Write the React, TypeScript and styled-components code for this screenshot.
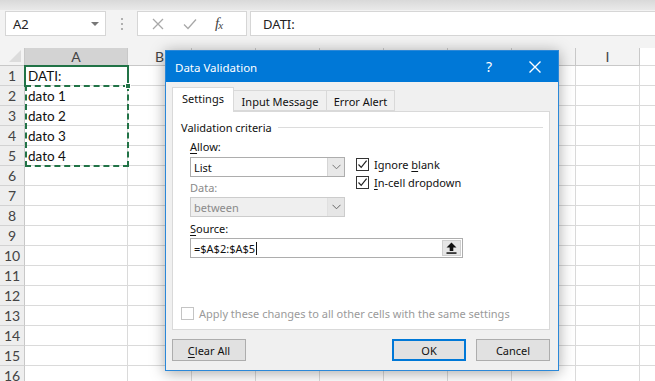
import React from "react";
import styled, { createGlobalStyle } from "styled-components";

const Global = createGlobalStyle`
  html, body { margin: 0; padding: 0; background: #ffffff; }
  body { overflow: hidden; }
  * { box-sizing: border-box; }
`;

const UI = `"Noto Sans", "Open Sans", sans-serif`;
const CELL = `Lato, "Liberation Sans", sans-serif`;

const Screen = styled.div`
  position: relative;
  width: 655px;
  height: 381px;
  overflow: hidden;
  background: #ffffff;
  display: flex;
  flex-direction: column;
`;

/* ---------- formula toolbar ---------- */
const TopBand = styled.div`
  height: 10px;
  background: linear-gradient(#d9d9d9, #e9e9e9);
  flex: none;
`;

const Toolbar = styled.div`
  height: 38px;
  flex: none;
  background: #f3f3f3;
  display: flex;
  align-items: flex-start;
  padding: 1px 0 0 5px;
`;

const NameBox = styled.div`
  width: 101px;
  height: 25px;
  background: #fff;
  border: 1px solid #d6d6d6;
  display: flex;
  align-items: center;
  justify-content: space-between;
  padding: 0 6px 0 7px;
  font: 13px ${UI};
  color: #222;
`;

const Caret = styled.span`
  width: 0;
  height: 0;
  border-left: 4px solid transparent;
  border-right: 4px solid transparent;
  border-top: 4px solid #777;
`;

const Grip = styled.div`
  width: 31px;
  height: 25px;
  display: flex;
  flex-direction: column;
  align-items: center;
  justify-content: center;
  gap: 3px;
`;

const Dot = styled.span`
  width: 2px;
  height: 2px;
  background: #b0b0b0;
`;

const FxBox = styled.div`
  width: 110px;
  height: 25px;
  background: #fff;
  border: 1px solid #d6d6d6;
  display: flex;
  align-items: center;
  padding-left: 14px;
  gap: 19px;
`;

const Fx = styled.span`
  font: italic 15px "Liberation Serif", serif;
  color: #444;
  margin-left: -1px;
  letter-spacing: -1px;
`;

const FxSub = styled.span`
  font-size: 11px;
  position: relative;
  top: 1px;
`;

const FormulaInput = styled.div`
  flex: 1;
  height: 25px;
  margin-left: 3px;
  background: #fff;
  border: 1px solid #d6d6d6;
  border-right: none;
  display: flex;
  align-items: center;
  padding-left: 12px;
  font: 13px ${UI};
  color: #222;
`;

/* ---------- sheet ---------- */
const SheetWrap = styled.div`
  position: relative;
  flex: 1;
  overflow: hidden;
`;

const Sheet = styled.div`
  display: grid;
  grid-template-columns: 25px 103px repeat(9, 64px);
  grid-template-rows: 18px;
  grid-auto-rows: 20px;
`;

const Cell = styled.div`
  border-right: 1px solid #dadada;
  border-bottom: 1px solid #dadada;
  font: 13.5px ${CELL};
  color: #111;
  padding: 0 0 1px 3px;
  display: flex;
  align-items: flex-end;
  white-space: nowrap;
  overflow: hidden;
`;

const ColHead = styled.div<{ $sel?: boolean }>`
  background: ${(p) => (p.$sel ? "#d3d3d3" : "#f3f3f3")};
  border-right: 1px solid #c8c8c8;
  border-bottom: 1px solid ${(p) => (p.$sel ? "#b8b8b8" : "#c8c8c8")};
  font: 14px ${CELL};
  color: #444;
  display: flex;
  align-items: center;
  justify-content: center;
`;

const RowHead = styled.div`
  background: #eeeeee;
  border-right: 1px solid #c8c8c8;
  border-bottom: 1px solid #d2d2d2;
  font: 14px ${CELL};
  color: #444;
  display: flex;
  align-items: center;
  justify-content: center;
`;

const Corner = styled.div`
  background: #f3f3f3;
  border-right: 1px solid #c8c8c8;
  border-bottom: 1px solid #c8c8c8;
  position: relative;
  &::after {
    content: "";
    position: absolute;
    right: 3px;
    bottom: 3px;
    width: 0;
    height: 0;
    border-left: 12px solid transparent;
    border-bottom: 12px solid #dcdcdc;
  }
`;

const ActiveCell = styled.div`
  position: absolute;
  left: 24px;
  top: 17px;
  width: 105px;
  height: 22px;
  border: 2px solid #217346;
  border-bottom: none;
  pointer-events: none;
`;

const Marquee = styled.div`
  position: absolute;
  left: 25px;
  top: 37px;
  width: 104px;
  height: 82px;
  border: 2px dashed #217346;
  pointer-events: none;
`;

const Handle = styled.div`
  position: absolute;
  left: 125px;
  top: 35px;
  width: 6px;
  height: 6px;
  background: #217346;
  border: 1px solid #fff;
`;

/* ---------- dialog ---------- */
const Dialog = styled.div`
  position: absolute;
  left: 165px;
  top: 50px;
  width: 394px;
  height: 321px;
  background: #f0f0f0;
  border: 1px solid #2b88d8;
  box-shadow: 0 2px 14px rgba(0, 0, 0, 0.35);
  display: flex;
  flex-direction: column;
  font: 11px ${UI};
  color: #111;
`;

const TitleBar = styled.div`
  height: 31px;
  background: #0078d7;
  color: #fff;
  display: flex;
  align-items: center;
  padding-left: 9px;
  flex: none;
`;

const Title = styled.span`
  flex: 1;
  font: 11.5px ${UI};
  margin-top: 1px;
`;

const Help = styled.span`
  font: 14px ${UI};
  width: 18px;
  text-align: center;
  margin-right: 30px;
`;

const CloseBtn = styled.span`
  width: 14px;
  height: 14px;
  margin-right: 16px;
  display: flex;
`;

const DialogBody = styled.div`
  flex: 1;
  padding: 5px 8px 10px 6px;
  display: flex;
  flex-direction: column;
`;

const Tabs = styled.div`
  display: flex;
  align-items: flex-end;
  height: 24px;
  position: relative;
  z-index: 1;
`;

const Tab = styled.div<{ $active?: boolean; $w: number }>`
  width: ${(p) => p.$w}px;
  height: ${(p) => (p.$active ? 25 : 21)}px;
  background: ${(p) => (p.$active ? "#ffffff" : "#f0f0f0")};
  border: 1px solid #d9d9d9;
  border-bottom: ${(p) => (p.$active ? "none" : "1px solid #d9d9d9")};
  border-left: ${(p) => (p.$active ? "1px solid #d9d9d9" : "none")};
  margin-bottom: ${(p) => (p.$active ? -1 : 0)}px;
  display: flex;
  align-items: center;
  justify-content: center;
  padding-top: ${(p) => (p.$active ? 0 : 1)}px;
  padding-bottom: ${(p) => (p.$active ? 4 : 0)}px;
`;

const Panel = styled.div`
  height: 219px;
  background: #fff;
  border: 1px solid #d9d9d9;
  padding: 0 6px 0 8px;
  display: flex;
  flex-direction: column;
`;

const GroupHeader = styled.div`
  margin-top: 7px;
  height: 16px;
  display: flex;
  align-items: center;
  gap: 6px;
  &::after {
    content: "";
    flex: 1;
    height: 1px;
    background: #dcdcdc;
  }
`;

const Criteria = styled.div`
  padding-left: 9px;
  display: flex;
  flex-direction: column;
`;

const CriteriaRow = styled.div`
  display: flex;
`;

const LeftCol = styled.div`
  width: 155px;
  display: flex;
  flex-direction: column;
`;

const RightCol = styled.div`
  margin-left: 11px;
  padding-top: 20px;
  display: flex;
  flex-direction: column;
`;

const FieldLabel = styled.div<{ $disabled?: boolean; $mt: number }>`
  height: 16px;
  line-height: 16px;
  margin-top: ${(p) => p.$mt}px;
  color: ${(p) => (p.$disabled ? "#8a8a8a" : "#111")};
`;

const U = styled.span`
  text-decoration: underline;
  text-underline-offset: 2px;
`;

const Select = styled.div<{ $disabled?: boolean; $mt: number }>`
  margin-top: ${(p) => p.$mt}px;
  height: 20px;
  display: flex;
  border: 1px solid ${(p) => (p.$disabled ? "#cccccc" : "#adadad")};
  background: ${(p) => (p.$disabled ? "#efefef" : "#ffffff")};
  color: ${(p) => (p.$disabled ? "#8a8a8a" : "#111")};
`;

const SelectText = styled.div`
  flex: 1;
  padding-left: 3px;
  display: flex;
  align-items: center;
`;

const SelectButton = styled.div<{ $disabled?: boolean }>`
  width: 17px;
  border-left: 1px solid ${(p) => (p.$disabled ? "#e0e0e0" : "#d5d5d5")};
  background: ${(p) => (p.$disabled ? "#e6e6e6" : "#e8e8e8")};
  display: flex;
  align-items: center;
  justify-content: center;
`;

const CheckRow = styled.label<{ $disabled?: boolean }>`
  height: 18px;
  display: flex;
  align-items: center;
  gap: 5px;
  color: ${(p) => (p.$disabled ? "#9a9a9a" : "#111")};
`;

const Box = styled.span<{ $disabled?: boolean }>`
  width: 13px;
  height: 13px;
  border: 1px solid ${(p) => (p.$disabled ? "#c4c4c4" : "#333")};
  background: #fff;
  display: flex;
  align-items: center;
  justify-content: center;
  flex: none;
`;

const SourceField = styled.div`
  margin-top: 1px;
  width: 273px;
  height: 20px;
  display: flex;
  border: 1px solid #adadad;
  background: #fff;
`;

const SourceText = styled.div`
  flex: 1;
  padding-left: 3px;
  display: flex;
  align-items: center;
`;

const Cursor = styled.span`
  width: 1px;
  height: 13px;
  background: #111;
  margin-left: 1px;
`;

const RefButton = styled.div`
  width: 19px;
  margin: 1px;
  background: #e6e6e6;
  border: 1px solid #cfcfcf;
  display: flex;
  align-items: center;
  justify-content: center;
`;

const Spacer = styled.div`
  flex: 1;
`;

const ApplyRow = styled.div`
  margin-bottom: 7px;
`;

const Footer = styled.div`
  margin-top: 9px;
  display: flex;
  align-items: center;
`;

const Button = styled.div<{ $default?: boolean; $ml?: number }>`
  width: 74px;
  height: 22px;
  margin-left: ${(p) => p.$ml ?? 0}px;
  background: #e1e1e1;
  border: ${(p) => (p.$default ? "2px solid #0078d7" : "1px solid #adadad")};
  display: flex;
  align-items: center;
  justify-content: center;
  color: #111;
`;

const Chevron = ({ color }: { color: string }) => (
  <svg width="9" height="6" viewBox="0 0 9 6">
    <path d="M0.5 0.8 L4.5 4.8 L8.5 0.8" fill="none" stroke={color} strokeWidth="1" />
  </svg>
);

const Check = () => (
  <svg width="11" height="11" viewBox="0 0 11 11">
    <path d="M1.5 5.5 L4.2 8.4 L9.6 1.6" fill="none" stroke="#222" strokeWidth="1.2" />
  </svg>
);

const cols = ["A", "B", "C", "D", "E", "F", "G", "H", "I"];
const data: Record<number, string> = { 1: "DATI:", 2: "dato 1", 3: "dato 2", 4: "dato 3", 5: "dato 4" };

export default function App() {
  const rows = Array.from({ length: 16 }, (_, i) => i + 1);
  return (
    <Screen>
      <Global />
      <TopBand />
      <Toolbar>
        <NameBox>
          A2
          <Caret />
        </NameBox>
        <Grip>
          <Dot />
          <Dot />
          <Dot />
        </Grip>
        <FxBox>
          <svg width="12" height="12" viewBox="0 0 12 12">
            <path d="M1 1 L11 11 M11 1 L1 11" stroke="#a8a8a8" strokeWidth="1.3" />
          </svg>
          <svg width="14" height="12" viewBox="0 0 14 12">
            <path d="M1 6.5 L5 10.5 L13 1.5" fill="none" stroke="#a8a8a8" strokeWidth="1.3" />
          </svg>
          <Fx>
            f<FxSub>x</FxSub>
          </Fx>
        </FxBox>
        <FormulaInput>DATI:</FormulaInput>
      </Toolbar>
      <SheetWrap>
        <Sheet>
          <Corner />
          {cols.map((c) => (
            <ColHead key={c} $sel={c === "A"}>
              {c}
            </ColHead>
          ))}
          <Cell />
          {rows.map((r) => (
            <React.Fragment key={r}>
              <RowHead>{r}</RowHead>
              <Cell>{data[r] ?? ""}</Cell>
              {cols.slice(1).map((c) => (
                <Cell key={c} />
              ))}
              <Cell />
            </React.Fragment>
          ))}
        </Sheet>
        <ActiveCell />
        <Marquee />
        <Handle />
      </SheetWrap>

      <Dialog>
        <TitleBar>
          <Title>Data Validation</Title>
          <Help>?</Help>
          <CloseBtn>
            <svg width="14" height="14" viewBox="0 0 14 14">
              <path d="M1.5 1.5 L12.5 12.5 M12.5 1.5 L1.5 12.5" stroke="#fff" strokeWidth="1.4" />
            </svg>
          </CloseBtn>
        </TitleBar>
        <DialogBody>
          <Tabs>
            <Tab $active $w={62}>Settings</Tab>
            <Tab $w={93}>Input Message</Tab>
            <Tab $w={68}>Error Alert</Tab>
          </Tabs>
          <Panel>
            <GroupHeader>Validation criteria</GroupHeader>
            <Criteria>
              <CriteriaRow>
                <LeftCol>
                  <FieldLabel $mt={4}>
                    <U>A</U>llow:
                  </FieldLabel>
                  <Select $mt={2}>
                    <SelectText>List</SelectText>
                    <SelectButton>
                      <Chevron color="#777" />
                    </SelectButton>
                  </Select>
                  <FieldLabel $mt={3} $disabled>
                    Data:
                  </FieldLabel>
                  <Select $mt={1} $disabled>
                    <SelectText>between</SelectText>
                    <SelectButton $disabled>
                      <Chevron color="#666" />
                    </SelectButton>
                  </Select>
                </LeftCol>
                <RightCol>
                  <CheckRow>
                    <Box>
                      <Check />
                    </Box>
                    <span>
                      Ignore <U>b</U>lank
                    </span>
                  </CheckRow>
                  <CheckRow>
                    <Box>
                      <Check />
                    </Box>
                    <span>
                      <U>I</U>n-cell dropdown
                    </span>
                  </CheckRow>
                </RightCol>
              </CriteriaRow>
              <FieldLabel $mt={4}>
                <U>S</U>ource:
              </FieldLabel>
              <SourceField>
                <SourceText>
                  =$A$2:$A$5
                  <Cursor />
                </SourceText>
                <RefButton>
                  <svg width="11" height="12" viewBox="0 0 11 12">
                    <path d="M5.5 0.5 L10.5 5.5 L7.3 5.5 L7.3 9 L3.7 9 L3.7 5.5 L0.5 5.5 Z" fill="#111" />
                    <rect x="0.5" y="10.3" width="10" height="1.5" fill="#111" />
                  </svg>
                </RefButton>
              </SourceField>
            </Criteria>
            <Spacer />
            <ApplyRow>
              <CheckRow $disabled>
                <Box $disabled />
                <span>Apply these changes to all other cells with the same settings</span>
              </CheckRow>
            </ApplyRow>
          </Panel>
          <Footer>
            <Button>
              <span>
                <U>C</U>lear All
              </span>
            </Button>
            <Spacer />
            <Button $default>OK</Button>
            <Button $ml={10}>Cancel</Button>
          </Footer>
        </DialogBody>
      </Dialog>
    </Screen>
  );
}
